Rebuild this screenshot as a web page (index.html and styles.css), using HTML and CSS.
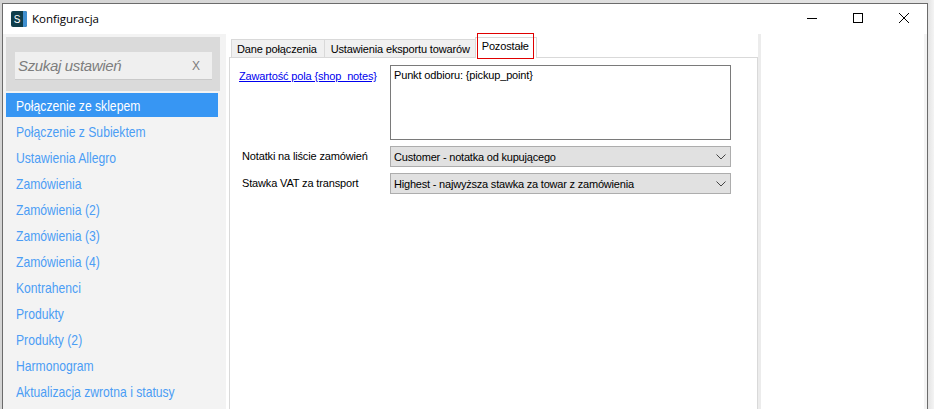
FILE: index.html
```html
<!DOCTYPE html>
<html lang="pl">
<head>
<meta charset="utf-8">
<title>Konfiguracja</title>
<link rel="stylesheet" href="styles.css">
</head>
<body>
<div class="window">
  <header class="titlebar">
    <svg class="app-icon" width="16" height="16" viewBox="0 0 16 16"><rect width="16" height="16" rx="2" fill="#0f3d4a"/><path d="M12 0h2a2 2 0 0 1 2 2v12a2 2 0 0 1-2 2h-2z" fill="#3f8fd0"/><text x="6" y="12" text-anchor="middle" class="app-letter">S</text></svg>
    <span class="title">Konfiguracja</span>
    <div class="controls">
      <svg class="ctl" width="46" height="30" viewBox="0 0 46 30"><path d="M18 14.500h10" stroke="#000" fill="none"/></svg>
      <svg class="ctl" width="46" height="30" viewBox="0 0 46 30"><rect x="18.500" y="9.500" width="9" height="9" stroke="#000" fill="none"/></svg>
      <svg class="ctl" width="46" height="30" viewBox="0 0 46 30"><path d="M18 9l10 10M28 9l-10 10" stroke="#000" fill="none"/></svg>
    </div>
  </header>
  <div class="content">
    <aside class="sidebar">
      <div class="search-box">
        <div class="search-input"><span class="placeholder">Szukaj ustawień</span><span class="clear">X</span></div>
      </div>
      <nav class="menu">
        <a class="item active"><span class="item-text">Połączenie ze sklepem</span></a>
        <a class="item"><span class="item-text">Połączenie z Subiektem</span></a>
        <a class="item"><span class="item-text">Ustawienia Allegro</span></a>
        <a class="item"><span class="item-text">Zamówienia</span></a>
        <a class="item"><span class="item-text">Zamówienia (2)</span></a>
        <a class="item"><span class="item-text">Zamówienia (3)</span></a>
        <a class="item"><span class="item-text">Zamówienia (4)</span></a>
        <a class="item"><span class="item-text">Kontrahenci</span></a>
        <a class="item"><span class="item-text">Produkty</span></a>
        <a class="item"><span class="item-text">Produkty (2)</span></a>
        <a class="item"><span class="item-text">Harmonogram</span></a>
        <a class="item"><span class="item-text">Aktualizacja zwrotna i statusy</span></a>
      </nav>
    </aside>
    <main class="main">
      <div class="tabs">
        <div class="tab tab-first">Dane połączenia</div>
        <div class="tab tab-second">Ustawienia eksportu towarów</div>
        <div class="tab selected">Pozostałe<span class="highlight"></span></div>
      </div>
      <section class="panel">
        <div class="row row-notes">
          <a class="link" href="#">Zawartość pola {shop_notes}</a>
          <div class="textarea">Punkt odbioru: {pickup_point}</div>
        </div>
        <div class="row row-select">
          <label class="label">Notatki na liście zamówień</label>
          <div class="select"><span>Customer - notatka od kupującego</span><svg width="10" height="6" viewBox="0 0 10 6"><path d="M.5.5l4.500 4.500 4.500-4.500" stroke="#444" fill="none"/></svg></div>
        </div>
        <div class="row row-select">
          <label class="label">Stawka VAT za transport</label>
          <div class="select"><span>Highest - najwyższa stawka za towar z zamówienia</span><svg width="10" height="6" viewBox="0 0 10 6"><path d="M.5.5l4.500 4.500 4.500-4.500" stroke="#444" fill="none"/></svg></div>
        </div>
      </section>
    </main>
    <div class="right-strip"></div>
  </div>
</div>
</body>
</html>
```
FILE: styles.css
```css
* { box-sizing: border-box; }
html, body { margin: 0; height: 100%; }
body {
  width: 934px;
  height: 409px;
  overflow: hidden;
  padding: 3px 6px 0 2px;
  background: linear-gradient(90deg, #d4d4d4 0, #e4e4e4 928px, #f4f4f4 934px);
  font-family: "Liberation Sans", Arial, sans-serif;
  font-size: 11px;
  letter-spacing: -.15px;
  color: #000;
}
.window {
  height: 420px;
  background: #fff;
  border: 1px solid #6b6b6b;
  display: flex;
  flex-direction: column;
}
.titlebar {
  height: 30px;
  flex: none;
  display: flex;
  align-items: center;
  padding-left: 8px;
}
.app-icon { flex: none; margin-top: -1px; }
.app-letter { font: 10px "Liberation Sans", sans-serif; fill: #fff; }
.title {
  margin-left: 5px;
  margin-top: -1px;
  font-family: "Open Sans", sans-serif;
  font-size: 11.5px;
  letter-spacing: 0;
}
.controls { margin-left: auto; display: flex; }
.ctl { display: block; }
.content { flex: 1; display: flex; min-height: 0; }
.sidebar {
  width: 223px;
  flex: none;
  background: #f3f3f3;
  padding: 3px 0 0 3px;
}
.search-box {
  width: 214px;
  height: 54px;
  background: #dadada;
  padding: 15px 8px 0 9px;
}
.search-input {
  height: 28px;
  background: #efefef;
  border-bottom: 1px solid #c9c9c9;
  display: flex;
  align-items: center;
  justify-content: space-between;
  padding: 0 12px 0 3px;
  color: #7d7d7d;
  font-size: 15px;
}
.placeholder { font-style: italic; letter-spacing: -.35px; }
.clear { font-size: 12px; letter-spacing: 0; }
.menu { display: flex; flex-direction: column; margin-top: 2px; }
.item {
  width: 212px;
  height: 26px;
  line-height: 25px;
  padding-left: 10px;
  font-size: 15px;
  letter-spacing: 0;
  color: #4b9df5;
}
.item-text {
  display: inline-block;
  transform: scaleX(.81);
  transform-origin: 0 50%;
  white-space: nowrap;
}
.item.active {
  height: 24px;
  margin-bottom: 2px;
  background: #3796f3;
  color: #fff;
}
.main {
  flex: none;
  width: 535px;
  padding: 5px 0 0 3px;
  border-right: 3px solid #ececec;
}
.tabs { display: flex; height: 18px; padding-left: 2px; align-items: flex-end; position: relative; z-index: 1; }
.tab {
  height: 18px;
  line-height: 18px;
  padding: 0 6px;
  background: #f0f0f0;
  border: 1px solid #d9d9d9;
  border-bottom: 0;
  margin-right: -1px;
  white-space: nowrap;
}
.tab-first { padding: 0 7px 0 5px; }
.tab-second { padding: 0 5px 0 6px; }
.tab.selected {
  position: relative;
  height: 21px;
  margin-bottom: -1px;
  line-height: 17px;
  padding: 0 7px 0 6px;
  background: #fff;
}
.highlight {
  position: absolute;
  left: 1px;
  right: 2px;
  top: -5px;
  bottom: -1px;
  border: 1px solid #e00000;
}
.panel {
  height: 360px;
  border: 1px solid #d9d9d9;
  border-bottom: 0;
  width: 529px;
  background: #fff;
  padding: 7px 0 0 0;
}
.row { display: flex; }
.row-notes { height: 81px; }
.link {
  width: 160px;
  padding: 5px 0 0 9px;
  color: #0000ee;
  white-space: nowrap;
}
.textarea {
  width: 341px;
  height: 75px;
  border: 1px solid #7a7a7a;
  padding: 3px 3px;
}
.row-select { height: 27px; }
.label { width: 160px; padding: 4px 0 0 12px; white-space: nowrap; }
.select {
  width: 341px;
  height: 21px;
  background: #e1e1e1;
  border: 1px solid #adadad;
  display: flex;
  align-items: center;
  justify-content: space-between;
  padding: 0 4px 0 3px;
  letter-spacing: -.2px;
}
.right-strip { margin-left: auto; width: 3px; background: #f3f3f3; }
```
